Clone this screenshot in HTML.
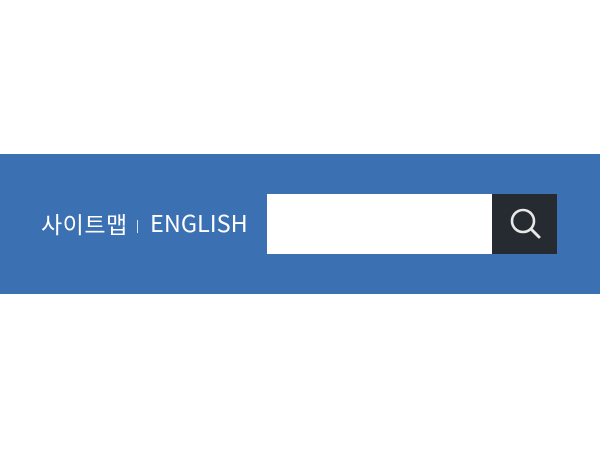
<!DOCTYPE html>
<html><head><meta charset="utf-8"><style>
body{margin:0;width:600px;height:450px;background:#fff;position:relative;overflow:hidden;font-family:"Liberation Sans","Noto Sans CJK KR",sans-serif}
.band{position:absolute;left:0;top:154px;width:600px;height:140px;background:#3b70b3}
.t{position:absolute;color:#fff;line-height:1;white-space:nowrap;font-family:'Noto Sans CJK KR',sans-serif}
.sep{position:absolute;left:137px;top:220px;width:1px;height:13px;background:#fff;opacity:.8}
.inp{position:absolute;left:267px;top:194px;width:225px;height:60px;background:#fff}
.btn{position:absolute;left:492px;top:194px;width:65px;height:60px;background:#262b31}
</style></head><body>
<div class="band"></div>
<div class="t" style="left:41px;font-size:23px;top:212px;letter-spacing:0.5px">사이트맵</div>
<div class="sep"></div>
<div class="t" style="left:150px;font-size:23.5px;top:211px">ENGLISH</div>
<div class="inp"></div>
<div class="btn"><svg width="65" height="60" viewBox="0 0 65 60"><circle cx="31" cy="27" r="11" fill="none" stroke="#e8e8e8" stroke-width="2.6"/><line x1="39" y1="35" x2="47" y2="43" stroke="#e8e8e8" stroke-width="3" stroke-linecap="round"/></svg></div>
</body></html>
